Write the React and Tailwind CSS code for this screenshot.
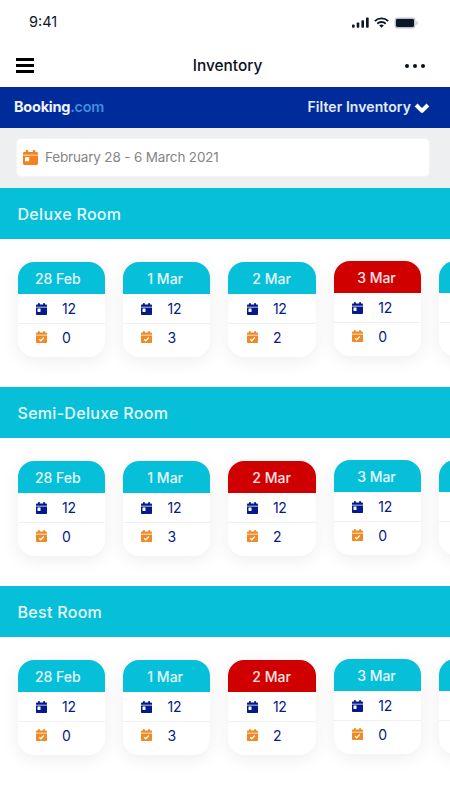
const rooms = [
  { name: 'Deluxe Room', soldOut: 3 },
  { name: 'Semi-Deluxe Room', soldOut: 2 },
  { name: 'Best Room', soldOut: 2 },
];

const days = [
  { date: '28 Feb', available: 12, booked: 0, offset: 'pr-[7px]' },
  { date: '1 Mar', available: 12, booked: 3, offset: 'pr-[3px]' },
  { date: '2 Mar', available: 12, booked: 2, offset: 'pr-px' },
  { date: '3 Mar', available: 12, booked: 0, offset: 'pr-[2px]' },
];

function CalendarIcon({ checked, className }) {
  return (
    <svg viewBox="0 0 15 15" fill="none" preserveAspectRatio="none" className={className}>
      <path
        d="M1.4 2H2.800V.8a.8.8 0 0 1 .8-.8h.8a.8.8 0 0 1 .8.8V2h4.600V.8a.8.8 0 0 1 .8-.8h.8a.8.8 0 0 1 .8.8V2h1.400C14.4 2 15 2.600 15 3.400V4.700H0V3.400C0 2.600.6 2 1.400 2Z"
        fill="currentColor"
      />
      <path d="M0 5.600h15v8c0 .8-.6 1.400-1.400 1.400H1.400C.6 15 0 14.400 0 13.600Z" fill="currentColor" />
      {checked ? (
        <path d="m4.300 10.200 2.200 2.100 4.200-4.200" stroke="#fff" strokeWidth="1.700" />
      ) : (
        <rect x="2" y="7" width="4.200" height="4.200" rx="0.500" fill="#fff" />
      )}
    </svg>
  );
}

function StatusBar() {
  return (
    <div className="flex h-11 items-center justify-between pl-[29px] pr-8 text-[#0b1728]">
      <span className="text-[14.5px] leading-none">9:41</span>
      <div className="flex items-center gap-[5px] pt-px">
        <svg width="17" height="11" viewBox="0 0 17 11" fill="currentColor">
          <rect x="0" y="7.5" width="2.6" height="3.3" rx="0.8" />
          <rect x="4.7" y="5.5" width="2.6" height="5.3" rx="0.8" />
          <rect x="9.4" y="3.2" width="2.6" height="7.6" rx="0.8" />
          <rect x="14" y="0.5" width="2.7" height="10.3" rx="0.8" />
        </svg>
        <svg width="15" height="11" viewBox="0 0 15 11" fill="none" stroke="currentColor" strokeWidth="1.9">
          <path d="M0.8 4.1a9.6 9.6 0 0 1 13.4 0" />
          <path d="M3.3 6.7a6 6 0 0 1 8.4 0" />
          <path d="M7.5 10.8 5.2 8.6a3.4 3.4 0 0 1 4.6 0Z" fill="currentColor" stroke="none" />
        </svg>
        <svg width="24" height="12" viewBox="0 0 24 12">
          <rect x="0.5" y="0.5" width="21" height="11" rx="3" fill="#bcc3c9" />
          <rect x="2" y="2" width="18" height="8" rx="1.4" fill="#0b1728" />
          <path d="M22.4 4v4c.8-.3 1.3-1.1 1.3-2s-.5-1.7-1.3-2Z" fill="#bcc3c9" />
        </svg>
      </div>
    </div>
  );
}

function Card({ raised, children }) {
  return (
    <div
      className={`h-[95px] w-[87.4px] shrink-0 overflow-hidden rounded-[16px] bg-white shadow-[0_4px_18px_rgba(0,0,0,0.07)] ${raised ? '-mt-px' : ''}`}
    >
      {children}
    </div>
  );
}

function DayCard({ day, soldOut, raised }) {
  return (
    <Card raised={raised}>
      <div
        className={`flex h-8 items-center justify-center text-[14px] font-medium text-white/90 ${day.offset} ${soldOut ? 'bg-[#d10000]' : 'bg-[#06bfd9]'}`}
      >
        {day.date}
      </div>
      <div className="flex h-[30px] items-center border-b border-[#f1f1f3] pl-[18.5px] text-[14px] text-[#04198c]">
        <CalendarIcon className="h-3 w-[11px] text-[#04198c]" />
        <span className="ml-[15px] tracking-[-0.3px]">{day.available}</span>
      </div>
      <div className="flex h-[26px] items-center pl-[18.5px] text-[14px] text-[#04198c]">
        <CalendarIcon checked className="h-3 w-[11px] text-[#f08a24]" />
        <span className="ml-[15px]">{day.booked}</span>
      </div>
    </Card>
  );
}

function RoomSection({ room }) {
  return (
    <section>
      <h2 className="flex h-[51px] items-center bg-[#06bfd9] pl-[17.5px] text-[16px] font-medium tracking-[0.3px] text-white/90">
        {room.name}
      </h2>
      <div className="flex h-[148px] items-start gap-[18px] overflow-hidden pl-[17.6px] pt-[23px]">
        {days.map((day, i) => (
          <DayCard key={day.date} day={day} soldOut={i === room.soldOut} raised={i === 3} />
        ))}
        {/* Edge of the next day */}
        <Card raised>
          <div className="h-8 bg-[#06bfd9]" />
          <div className="h-[30px] border-b border-[#f1f1f3]" />
        </Card>
      </div>
    </section>
  );
}

export default function App() {
  return (
    <div className="h-[800px] w-[450px] overflow-hidden bg-white font-['Inter',sans-serif]">
      <StatusBar />

      {/* Navigation */}
      <header className="flex h-[43px] items-center justify-between pl-4 pr-[25px] text-[#07101d]">
        <button className="flex w-[60px] flex-col gap-[3px]" aria-label="Menu">
          <span className="h-[3px] w-[17.5px] bg-black" />
          <span className="h-[3px] w-[17.5px] bg-black" />
          <span className="h-[3px] w-[17.5px] bg-black" />
        </button>
        <h1 className="pl-[14px] text-[15.4px] font-medium leading-none">Inventory</h1>
        <button className="flex w-[60px] justify-end gap-1" aria-label="More">
          <span className="size-1 rounded-full bg-current" />
          <span className="size-1 rounded-full bg-current" />
          <span className="size-1 rounded-full bg-current" />
        </button>
      </header>

      {/* Channel bar */}
      <div className="flex h-[41px] items-center justify-between bg-[#002b9a] pl-[14px] pr-5">
        <span className="pb-px text-[14.5px] font-bold tracking-[-0.25px] text-[#eef3ff]">
          Booking<span className="font-semibold text-[#3d8fdf]">.com</span>
        </span>
        <button className="flex items-center gap-[3px] pb-[2px] text-[14px] font-semibold tracking-[0.08px] text-[#e3ebff]">
          Filter Inventory
          <svg width="16" height="12" viewBox="0 0 16 12" fill="none" className="mt-[2px]">
            <path d="m2.100 3 5.900 5.900L13.900 3" stroke="#fff" strokeWidth="4" strokeLinejoin="round" />
          </svg>
        </button>
      </div>

      {/* Date range */}
      <div className="h-[60px] bg-[#eeeff1] pl-4 pr-5 pt-[10px]">
        <div className="flex h-[39px] items-center gap-[7px] rounded-[5px] border border-[#f4f4f5] bg-white pl-[6px] text-[13.5px] text-[#858585]">
          <CalendarIcon className="size-[15px] text-[#f5821f]" />
          <span className="tracking-[-0.17px]">February 28 - 6 March 2021</span>
        </div>
      </div>

      {rooms.map((room) => (
        <RoomSection key={room.name} room={room} />
      ))}
    </div>
  );
}
